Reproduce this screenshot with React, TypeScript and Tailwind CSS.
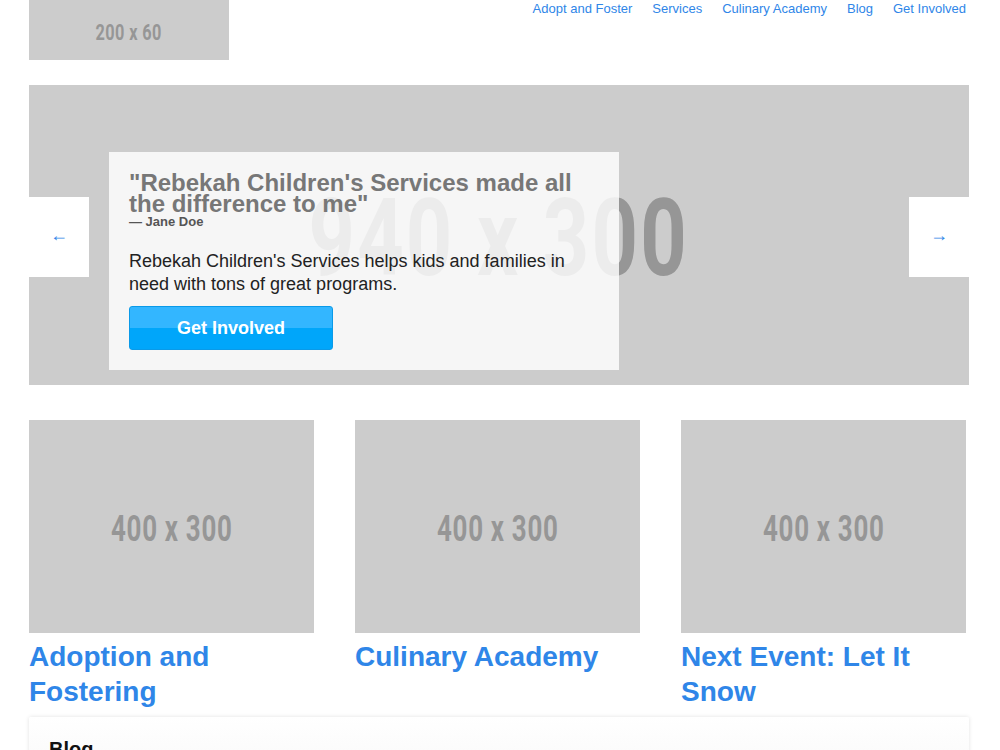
import React from "react";

const sans = { fontFamily: '"Liberation Sans", Arial, sans-serif' };

function Placeholder({ label, className, textClass }: { label: string; className: string; textClass: string }) {
  return (
    <div className={`flex items-center justify-center bg-[#cccccc] ${className}`}>
      <span className={`font-bold text-[#969696] font-['Roboto',sans-serif] ${textClass}`}>{label}</span>
    </div>
  );
}

const links = ["Adopt and Foster", "Services", "Culinary Academy", "Blog", "Get Involved"];

const cards = [
  { title: "Adoption and Fostering" },
  { title: "Culinary Academy" },
  { title: "Next Event: Let It Snow" },
];

const App: React.FC = () => {
  return (
    <div className="min-h-screen bg-white" style={sans}>
      <div className="ml-[29px] w-[940px]">
        {/* Header */}
        <div className="flex items-start justify-between">
          <Placeholder label="200 x 60" className="h-[60px] w-[200px]" textClass="text-[22px] tracking-[0.5px] scale-x-[0.74] translate-y-[2px]" />
          <nav className="flex gap-[20px] pr-[3px] text-[13px] leading-[18px] text-[#2f86e8]">
            {links.map((l) => (
              <a key={l} href="#" className="hover:underline">
                {l}
              </a>
            ))}
          </nav>
        </div>

        {/* Hero carousel */}
        <div className="relative mt-[25px] h-[300px]">
          <Placeholder label="940 x 300" className="h-full w-full" textClass="text-[108px] leading-none tracking-[3px] scale-x-[0.75] translate-y-[3px]" />
          <div className="absolute left-[80px] top-[67px] h-[218px] w-[510px] bg-white/[0.82] px-[20px] pt-[20px]">
            <h2 className="text-[24px] font-bold leading-[21px] text-[#777777]">
              "Rebekah Children's Services made all the difference to me"
            </h2>
            <p className="text-[13px] font-bold leading-[16px] text-[#555555]">— Jane Doe</p>
            <p className="mt-[20px] text-[18px] leading-[23px] text-[#222222]">
              Rebekah Children's Services helps kids and families in need with tons of great programs.
            </p>
            <button className="mt-[10px] h-[44px] w-[204px] rounded-[3px] border border-[#0a9ae8] bg-gradient-to-b from-[#33b6ff] from-50% to-[#00a6fa] to-50% text-[18px] font-bold text-white">
              Get Involved
            </button>
          </div>
          <button className="absolute left-0 top-[112px] flex h-[80px] w-[60px] items-center justify-center bg-white pb-[5px] text-[18px] leading-none text-[#2f86e8]">
            ←
          </button>
          <button className="absolute right-0 top-[112px] flex h-[80px] w-[60px] items-center justify-center bg-white pb-[5px] text-[18px] leading-none text-[#2f86e8]">
            →
          </button>
        </div>

        {/* Cards */}
        <div className="mt-[35px] grid grid-cols-[285px_285px_285px] gap-x-[41px]">
          {cards.map((c) => (
            <div key={c.title}>
              <Placeholder label="400 x 300" className="h-[213px] w-[285px]" textClass="text-[37px] tracking-[1px] scale-x-[0.7] translate-y-[2px]" />
              <h3 className="mt-[6px] text-[28px] font-bold leading-[35px] text-[#2f86e8]">{c.title}</h3>
            </div>
          ))}
        </div>

        {/* Blog panel */}
        <div className="mt-[8px] rounded-[2px] bg-gradient-to-b from-white to-[#f3f3f3] px-[20px] pt-[20px] pb-[40px] shadow-[0_0_4px_rgba(0,0,0,0.12)]">
          <h4 className="text-[20px] font-bold leading-[24px] text-[#111111]">Blog</h4>
          <p className="mt-[10px] text-[14px] text-[#333333]">Latest news and stories from Rebekah Children's Services.</p>
        </div>
      </div>
    </div>
  );
};

export default App;
